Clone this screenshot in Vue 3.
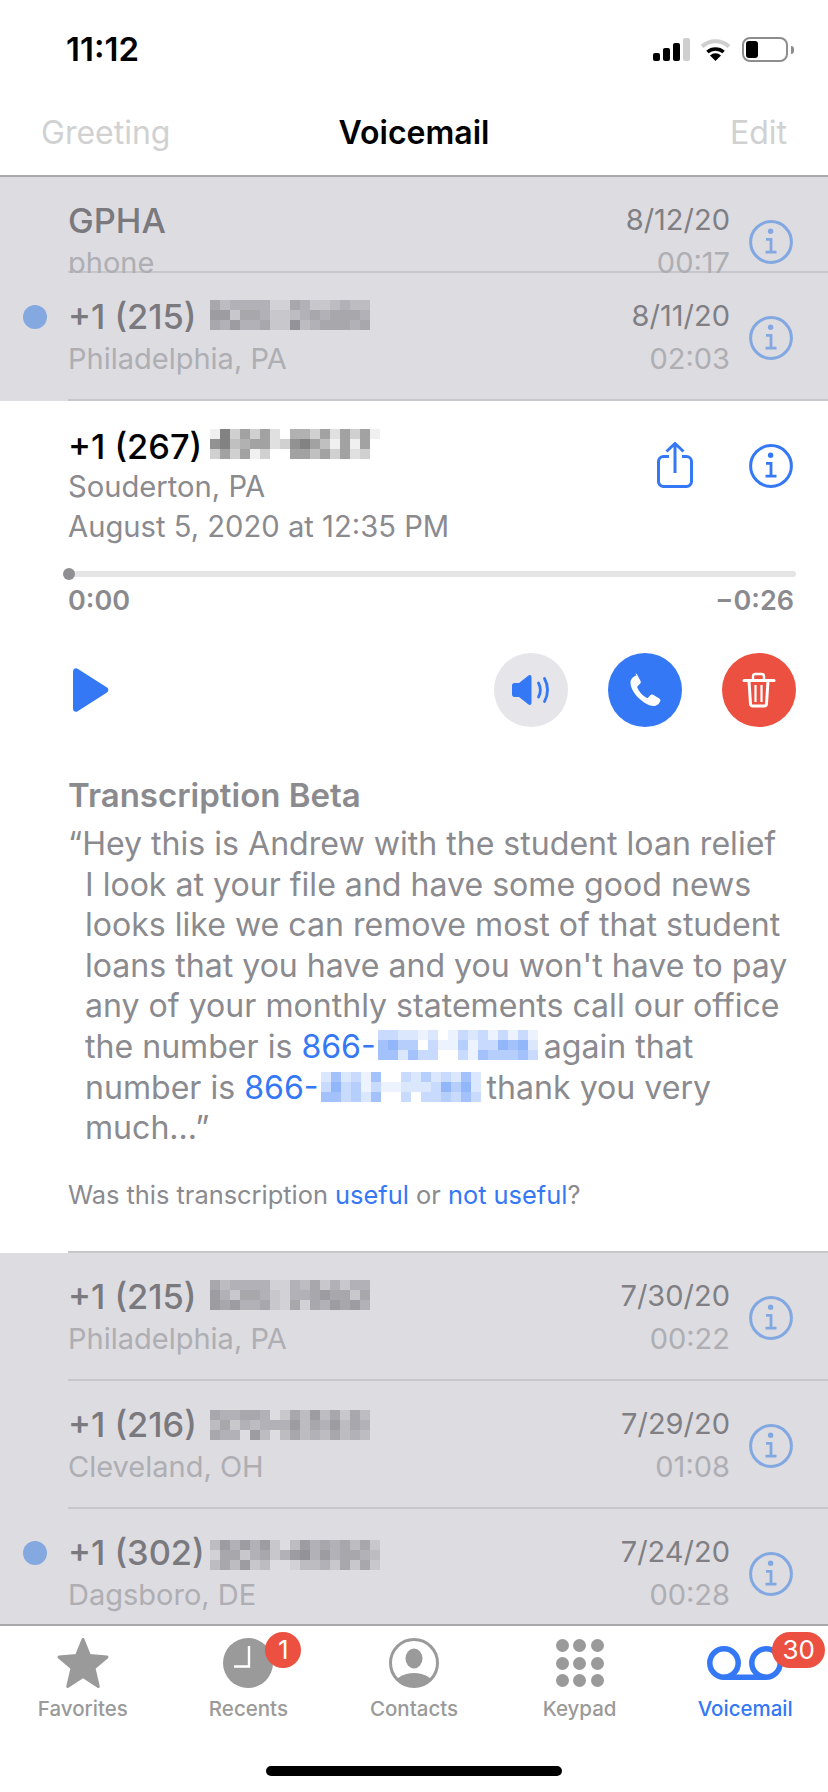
<template>
  <div class="phone">
    <svg class="defs" width="0" height="0">
      <symbol id="info" viewBox="0 0 44 44">
        <circle cx="22" cy="22" r="20.4" fill="none" stroke="currentColor" stroke-width="3" />
        <circle cx="21.6" cy="11.2" r="2.7" fill="currentColor" />
        <path d="M17 19.4h5v12.6M16.5 32.2h11" fill="none" stroke="currentColor" stroke-width="2.8" />
      </symbol>
    </svg>

    <header class="top">
      <div class="status">
        <span class="clock">11:12</span>
        <div class="status-icons">
          <svg class="signal" width="37" height="24" viewBox="0 0 37 24">
            <rect x="0" y="16" width="7" height="8" rx="2" />
            <rect x="10" y="11" width="7" height="13" rx="2" />
            <rect x="20" y="6" width="7" height="18" rx="2" />
            <rect x="30" y="1" width="7" height="23" rx="2" fill="#cfcfcf" />
          </svg>
          <svg class="wifi" width="31" height="24" viewBox="0 0 31 24">
            <path d="M2 9.500a20 20 0 0 1 27 0" fill="none" stroke="#cfcfcf" stroke-width="4" />
            <path d="M7.400 15a12.500 12.500 0 0 1 16.200 0" fill="none" stroke="#000" stroke-width="3.600" />
            <path d="M15.500 24l-5.500-5.600a8 8 0 0 1 11 0z" />
          </svg>
          <div class="battery"><div class="battery-fill"></div></div>
          <div class="battery-nub"></div>
        </div>
      </div>
      <nav class="nav">
        <span class="nav-btn">Greeting</span>
        <span class="nav-title">Voicemail</span>
        <span class="nav-btn edit">Edit</span>
      </nav>
    </header>

    <main class="list">
      <div v-for="row in topRows" :key="row.date" class="row" :class="{ first: row.first }">
        <div class="lead"><span v-if="row.unread" class="dot"></span></div>
        <div class="row-body">
          <div class="row-main">
            <div class="name">
              <span class="number">{{ row.name }}</span>
              <span v-if="row.blur" class="mosaic" :style="gridFor(row.blur, row.shift)">
                <i v-for="(c, i) in cells(row.blur)" :key="i" :style="{ background: gray(c) }"></i>
              </span>
            </div>
            <div class="place">{{ row.place }}</div>
          </div>
          <div class="row-meta">
            <div class="date">{{ row.date }}</div>
            <div class="len">{{ row.len }}</div>
          </div>
          <svg class="info dim" width="44" height="44"><use href="#info" /></svg>
        </div>
      </div>

      <section class="open">
        <div class="open-head">
          <div class="open-text">
            <div class="name dark">
              <span class="number">+1 (267)</span>
              <span class="mosaic" :style="gridFor(openBlur, 6)">
                <i v-for="(c, i) in cells(openBlur)" :key="i" :style="{ background: ink(c) }"></i>
              </span>
            </div>
            <div class="open-sub">Souderton, PA</div>
            <div class="open-sub">August 5, 2020 at 12:35 PM</div>
          </div>
          <svg class="share" width="36" height="46" viewBox="0 0 36 46" fill="none" stroke="#3478f6" stroke-width="3">
            <path d="M12 14.500H6.500a5 5 0 0 0-5 5v20a5 5 0 0 0 5 5h23a5 5 0 0 0 5-5v-20a5 5 0 0 0-5-5H25" />
            <path d="M18 31V2M9.500 9.500L18 1.500l8.500 8" />
          </svg>
          <svg class="info" width="44" height="44"><use href="#info" /></svg>
        </div>

        <div class="track"><span class="knob"></span></div>
        <div class="times"><span>0:00</span><span>−0:26</span></div>

        <div class="controls">
          <svg class="play" width="38" height="46" viewBox="0 0 38 46">
            <path d="M1 4.500c0-3 3-4.400 5-2.400l29 18.500c1.800 1.300 1.800 3.500 0 4.800L6 43.900c-2 2-5 .6-5-2.400z" fill="#3478f6" />
          </svg>
          <button class="round speaker">
            <svg width="74" height="74" viewBox="0 0 74 74">
              <path d="M18 32.500c0-1.400 1-2.500 2.400-2.500h4.600l9.500-7.500c1.300-1 3-.2 3 1.500v26c0 1.700-1.700 2.500-3 1.500L25 44h-4.600c-1.400 0-2.400-1.100-2.400-2.500z" fill="#3478f6" />
              <path d="M44.500 30c2.400 4.500 2.400 9.500 0 14M50.500 25.500c4 7 4 16 0 23" fill="none" stroke="#3478f6" stroke-width="2.800" stroke-linecap="round" />
            </svg>
          </button>
          <button class="round call">
            <svg width="74" height="74" viewBox="0 0 74 74">
              <path d="M28.500 22.500c-2.500.5-6 3-6 7 0 5.500 3.400 10.800 8.400 15.800 4.500 4.500 10.600 7.700 14.600 7.700 3.500 0 6-2.600 6.800-5 .3-1-.2-1.800-1-2.400l-6.200-3.800c-1-.6-2-.4-2.800.4l-2 2.200c-.7.6-1.500.7-2.300.2-2-1.200-3.800-2.800-5.200-4.400-1.400-1.600-2.600-3.600-3.400-5.400-.3-.8-.1-1.500.5-2l2.200-2c.8-.8.9-1.700.4-2.700l-3-5.900c-.5-.8-1-1.800-2-1.600z" fill="#fff" />
            </svg>
          </button>
          <button class="round trash">
            <svg width="74" height="74" viewBox="0 0 74 74" fill="none" stroke="#fff">
              <path d="M22 27.500h30" stroke-width="3" stroke-linecap="round" />
              <path d="M31 27v-3.500c0-1.500 1-2.500 2.500-2.500h6c1.500 0 2.500 1 2.500 2.500V27" stroke-width="2.400" />
              <path d="M27 28l1.500 23c.1 1.300 1 2 2.300 2h11.400c1.300 0 2.200-.7 2.300-2L46 28" stroke-width="3" />
              <path d="M33.500 32v17M39.500 32v17" stroke-width="2.200" />
            </svg>
          </button>
        </div>

        <h3 class="tr-title">Transcription Beta</h3>
        <p class="tr-body">
          “Hey this is Andrew with the student loan relief<br />
          I look at your file and have some good news<br />
          looks like we can remove most of that student<br />
          loans that you have and you won't have to pay<br />
          any of your monthly statements call our office<br />
          the number is <span class="link">866-</span><span class="mosaic inline" :style="gridFor(numA, 3)"><i v-for="(c, i) in cells(numA)" :key="i" :style="{ background: blue(c) }"></i></span> again that<br />
          number is <span class="link">866-</span><span class="mosaic inline" :style="gridFor(numB, 4)"><i v-for="(c, i) in cells(numB)" :key="i" :style="{ background: blue(c) }"></i></span> thank you very<br />
          much...”
        </p>
        <p class="tr-ask">Was this transcription <span class="link">useful</span> or <span class="link">not useful</span>?</p>
        <div class="open-rule"></div>
      </section>

      <div v-for="row in lowRows" :key="row.date" class="row">
        <div class="lead"><span v-if="row.unread" class="dot"></span></div>
        <div class="row-body">
          <div class="row-main">
            <div class="name">
              <span class="number">{{ row.name }}</span>
              <span class="mosaic" :style="gridFor(row.blur, row.shift)">
                <i v-for="(c, i) in cells(row.blur)" :key="i" :style="{ background: gray(c) }"></i>
              </span>
            </div>
            <div class="place">{{ row.place }}</div>
          </div>
          <div class="row-meta">
            <div class="date">{{ row.date }}</div>
            <div class="len">{{ row.len }}</div>
          </div>
          <svg class="info dim" width="44" height="44"><use href="#info" /></svg>
        </div>
      </div>
    </main>

    <footer class="tabbar">
      <div class="tabs">
        <div class="tab">
          <div class="tab-icon">
            <svg width="54" height="52" viewBox="0 0 54 52">
              <path d="M27 2.500L33.500 18.500 51 20 38 31 42.300 49.500 27 39.500 11.700 49.500 16 31 3 20 20.500 18.500z" fill="#9a9a9a" stroke="#9a9a9a" stroke-width="3" stroke-linejoin="round" />
            </svg>
          </div>
          <span class="tab-label">Favorites</span>
        </div>
        <div class="tab">
          <div class="tab-icon">
            <svg width="50" height="50" viewBox="0 0 50 50">
              <circle cx="25" cy="25" r="25" fill="#9a9a9a" />
              <path d="M26 8v20.500H11" fill="none" stroke="#fff" stroke-width="2.400" />
            </svg>
          </div>
          <span class="tab-label">Recents</span>
          <span class="badge one">1</span>
        </div>
        <div class="tab">
          <div class="tab-icon">
            <svg width="50" height="50" viewBox="0 0 50 50">
              <clipPath id="face"><circle cx="25" cy="25" r="24" /></clipPath>
              <circle cx="25" cy="25" r="23.500" fill="none" stroke="#9a9a9a" stroke-width="3" />
              <ellipse cx="25" cy="20.500" rx="8.500" ry="10" fill="#9a9a9a" />
              <ellipse cx="25" cy="48" rx="20" ry="13" fill="#9a9a9a" clip-path="url(#face)" />
            </svg>
          </div>
          <span class="tab-label">Contacts</span>
        </div>
        <div class="tab">
          <div class="tab-icon">
            <div class="keypad"><span v-for="n in 9" :key="n"></span></div>
          </div>
          <span class="tab-label">Keypad</span>
        </div>
        <div class="tab active">
          <div class="tab-icon">
            <svg width="76" height="34" viewBox="0 0 76 34" fill="none" stroke="#3478f6" stroke-width="5.500">
              <circle cx="17" cy="17" r="14.200" />
              <circle cx="59" cy="17" r="14.200" />
              <path d="M17 31.200h42" />
            </svg>
          </div>
          <span class="tab-label">Voicemail</span>
          <span class="badge wide">30</span>
        </div>
      </div>
      <div class="home"></div>
    </footer>
  </div>
</template>

<script setup>
const topRows = [
  { first: true, name: 'GPHA', place: 'phone', date: '8/12/20', len: '00:17' },
  {
    unread: true,
    name: '+1 (215)',
    place: 'Philadelphia, PA',
    date: '8/11/20',
    len: '02:03',
    shift: 6,
    blur: ['5344441154223433', '6625542234545554', '5464452273455545'],
  },
]

const lowRows = [
  {
    name: '+1 (215)',
    place: 'Philadelphia, PA',
    date: '7/30/20',
    len: '00:22',
    shift: 6,
    blur: ['5344441143524244', '6425542144565525', '6564452151546564'],
  },
  {
    name: '+1 (216)',
    place: 'Cleveland, OH',
    date: '7/29/20',
    len: '01:08',
    shift: 8,
    blur: ['5445540253635253', '3524344463546354', '5440630353435343'],
  },
  {
    unread: true,
    name: '+1 (302)',
    place: 'Dagsboro, DE',
    date: '7/24/20',
    len: '00:28',
    shift: 10,
    blur: ['36464620364545352', '15524524674645543', '35362300133425252'],
  },
]

const openBlur = ['18363620553626361', '78456623786416160', '36361300664636230']
const numA = ['3322120132313131', '5644031141336562', '5525330031544453']
const numB = ['2523150032423252', '3634131122236462', '5534250030334353']

const cells = (rows) => rows.join('').split('').map(Number)
const gridFor = (rows, top) => ({
  gridTemplateColumns: `repeat(${rows[0].length}, 10px)`,
  marginTop: `${top}px`,
})

const gray = (d) => `rgba(70, 70, 75, ${d * 0.07})`
const ink = (d) => `rgba(60, 60, 60, ${d * 0.08})`
const blue = (d) => `rgba(52, 120, 246, ${d * 0.09})`
</script>

<style>
body {
  background: #fff;
}
</style>

<style scoped>
.phone {
  width: 828px;
  height: 1792px;
  display: flex;
  flex-direction: column;
  overflow: hidden;
  background: #fff;
  font-family: Inter, "Liberation Sans", sans-serif;
  color: #000;
}

.defs {
  position: absolute;
}

.top {
  flex: none;
  position: relative;
  z-index: 2;
  background: #fff;
  border-bottom: 2px solid #a9a9ab;
}

.status {
  height: 88px;
  display: flex;
  justify-content: space-between;
  padding: 37px 34px 0 66px;
  box-sizing: border-box;
}

.clock {
  font-size: 33px;
  line-height: 24px;
  font-weight: 600;
}

.status-icons {
  display: flex;
  align-items: flex-start;
}

.signal {
  margin-right: 10px;
}

.wifi {
  margin-right: 11px;
}

.battery {
  width: 46px;
  height: 25px;
  box-sizing: border-box;
  border: 2px solid #8d8d8d;
  border-radius: 8px;
  padding: 2px;
}

.battery-fill {
  width: 12px;
  height: 17px;
  background: #000;
  border-radius: 3px;
}

.battery-nub {
  width: 3px;
  height: 8px;
  margin: 9px 0 0 3px;
  background: #8d8d8d;
  border-radius: 0 3px 3px 0;
}

.nav {
  height: 87px;
  box-sizing: border-box;
  display: grid;
  grid-template-columns: 1fr auto 1fr;
  padding: 24px 41px 0;
  line-height: 42px;
  font-size: 32px;
}

.nav-btn {
  color: #d1d1d1;
}

.edit {
  text-align: right;
}

.nav-title {
  font-weight: 600;
}

.list {
  flex: 1;
  min-height: 0;
  overflow: hidden;
  background: #dddce1;
}

.row {
  display: flex;
  height: 128px;
}

.row.first {
  height: 96px;
  overflow: hidden;
}

.lead {
  flex: none;
  width: 68px;
  padding: 32px 0 0 23px;
  box-sizing: border-box;
}

.dot {
  display: block;
  width: 24px;
  height: 24px;
  border-radius: 50%;
  background: #84a8e0;
}

.row-body {
  flex: 1;
  display: flex;
  padding-right: 35px;
  border-bottom: 2px solid #c7c7cb;
}

.row-main {
  flex: 1;
  padding-top: 21px;
}

.name {
  font-size: 34.400px;
  line-height: 46px;
  font-weight: 500;
  color: #79797e;
  white-space: nowrap;
}

.name.dark {
  color: #000;
  line-height: 48px;
  margin-bottom: -4px;
}

.number {
  display: inline-block;
  width: 142px;
}

.place {
  font-size: 29px;
  line-height: 38px;
  color: #aeaeb3;
}

.row-meta {
  padding-top: 21px;
  text-align: right;
  font-size: 29px;
  line-height: 43px;
}

.date {
  color: #7f7f84;
}

.len {
  color: #aeaeb3;
}

.info {
  flex: none;
  color: #3478f6;
}

.info.dim {
  margin: 43px 0 0 19px;
  color: #82a8e2;
}

.mosaic {
  display: inline-grid;
  grid-auto-rows: 10px;
  vertical-align: top;
}

.mosaic.inline {
  margin-left: 2px;
  margin-right: -3px;
}

.mosaic i {
  display: block;
}

.open {
  background: #fff;
  padding: 0 32px 0 68px;
  height: 852px;
  box-sizing: border-box;
  display: flex;
  flex-direction: column;
}

.open-head {
  display: flex;
  align-items: flex-start;
  flex: none;
  height: 170px;
  padding-top: 22px;
  box-sizing: border-box;
}

.open-text {
  flex: 1;
}

.open-sub {
  font-size: 29.200px;
  line-height: 40px;
  color: #8a8a8f;
}

.share {
  margin: 19px 56px 0 0;
}

.info:not(.dim) {
  margin: 21px 3px 0 0;
}

.track {
  position: relative;
  flex: none;
  height: 6px;
  margin-left: 1px;
  background: #e5e5e6;
  border-radius: 3px;
}

.knob {
  position: absolute;
  left: -6px;
  top: -3px;
  width: 12px;
  height: 12px;
  border-radius: 50%;
  background: #8e8e93;
}

.times {
  display: flex;
  justify-content: space-between;
  padding: 9px 2px 0 0;
  font-size: 27px;
  line-height: 30px;
  font-weight: 600;
  color: #8a8a8f;
}

.controls {
  display: flex;
  align-items: center;
  gap: 40px;
  margin-top: 37px;
}

.play {
  margin: 0 auto 0 4px;
}

.round {
  width: 74px;
  height: 74px;
  padding: 0;
  border: 0;
  border-radius: 50%;
}

.round svg {
  display: block;
}

.speaker {
  background: #e5e5ea;
}

.call {
  background: #3478f6;
}

.trash {
  background: #eb5040;
}

.tr-title {
  margin: 47px 0 0;
  font-size: 33px;
  line-height: 42px;
  font-weight: 600;
  color: #8a8a8f;
}

.tr-body {
  margin: 8px 0 0;
  padding-left: 17px;
  text-indent: -17px;
  font-size: 32.100px;
  line-height: 40.600px;
  color: #8a8a8f;
  white-space: nowrap;
}

.tr-ask {
  margin: 30px 0 0;
  font-size: 25.400px;
  line-height: 32px;
  color: #8a8a8f;
}

.open-rule {
  height: 2px;
  margin: auto -32px 0 0;
  background: #c7c7cb;
}

.link {
  color: #3478f6;
}

.tabbar {
  flex: none;
  height: 168px;
  box-sizing: border-box;
  border-top: 2px solid #a9a9ab;
  background: #fff;
  position: relative;
  z-index: 2;
}

.tabs {
  display: grid;
  grid-template-columns: repeat(5, 1fr);
}

.tab {
  position: relative;
  display: flex;
  flex-direction: column;
  align-items: center;
  padding-top: 10px;
}

.tab-icon {
  height: 54px;
  display: flex;
  align-items: center;
  justify-content: center;
}

.tab-label {
  margin-top: 6px;
  font-size: 20.500px;
  line-height: 26px;
  font-weight: 500;
  color: #9a9a9a;
}

.tab.active .tab-label {
  color: #3478f6;
}

.keypad {
  display: grid;
  grid-template-columns: repeat(3, 13px);
  gap: 4.500px;
}

.keypad span {
  width: 13px;
  height: 13px;
  border-radius: 50%;
  background: #9a9a9a;
}

.badge {
  position: absolute;
  top: 6px;
  left: 50%;
  height: 36px;
  border-radius: 18px;
  background: #eb5040;
  color: #fff;
  font-size: 26px;
  line-height: 36px;
  text-align: center;
}

.badge.one {
  width: 36px;
  margin-left: 17px;
}

.badge.wide {
  width: 53px;
  margin-left: 27px;
}

.home {
  width: 296px;
  height: 10px;
  margin: 44px auto 0;
  border-radius: 5px;
  background: #000;
}
</style>
